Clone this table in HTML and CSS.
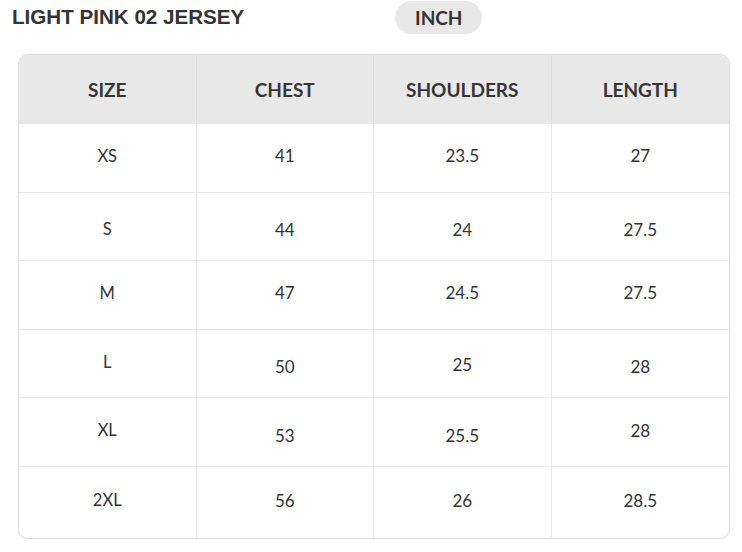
FILE: index.html
```html
<!DOCTYPE html>
<html lang="en">
<head>
<meta charset="utf-8">
<title>Light Pink 02 Jersey – Size Chart</title>
<link rel="stylesheet" href="styles.css">
</head>
<body>
<div class="top">
  <h1 class="title">LIGHT PINK 02 JERSEY</h1>
  <span class="unit">INCH</span>
</div>
<div class="chart">
  <div class="cell head">SIZE</div>
  <div class="cell head">CHEST</div>
  <div class="cell head">SHOULDERS</div>
  <div class="cell head last-col">LENGTH</div>

  <div class="cell up">XS</div>
  <div class="cell num up">41</div>
  <div class="cell num up">23.5</div>
  <div class="cell num up last-col">27</div>

  <div class="cell dn">S</div>
  <div class="cell num dn">44</div>
  <div class="cell num dn">24</div>
  <div class="cell num dn last-col">27.5</div>

  <div class="cell up">M</div>
  <div class="cell num up">47</div>
  <div class="cell num up">24.5</div>
  <div class="cell num up last-col">27.5</div>

  <div class="cell up">L</div>
  <div class="cell num dn">50</div>
  <div class="cell num dn2">25</div>
  <div class="cell num dn last-col">28</div>

  <div class="cell up">XL</div>
  <div class="cell num dn">53</div>
  <div class="cell num dn">25.5</div>
  <div class="cell num up last-col">28</div>

  <div class="cell up last-row">2XL</div>
  <div class="cell num up last-row">56</div>
  <div class="cell num up last-row">26</div>
  <div class="cell num up last-row last-col">28.5</div>
</div>
</body>
</html>
```
FILE: styles.css
```css
html, body {
  margin: 0;
  padding: 0;
  background: #ffffff;
}

body {
  color: #333333;
  font-family: Lato, "Liberation Sans", sans-serif;
}

.top {
  display: flex;
  align-items: center;
  padding: 1px 0 0 12px;
  height: 33px;
}

.title {
  width: 383px;
  margin: 0 0 2px 0;
  font-family: "Liberation Sans", Arial, sans-serif;
  font-weight: 700;
  font-size: 20.6px;
  line-height: normal;
  color: #333333;
}

.unit {
  height: 33px;
  line-height: 34px;
  padding: 0 20px;
  border-radius: 17px;
  background: #e8e8e8;
  font-family: Lato, sans-serif;
  font-weight: 700;
  font-size: 19px;
  color: #333333;
}

.chart {
  display: grid;
  grid-template-columns: repeat(4, 1fr);
  grid-template-rows: 69px repeat(5, 68.6px) 70.6px;
  box-sizing: border-box;
  width: 712px;
  margin: 20px 0 0 18px;
  border: 1px solid #dcdcdc;
  border-radius: 10px;
  overflow: hidden;
  box-shadow: 0 1px 2px rgba(0, 0, 0, 0.06);
}

.cell {
  display: flex;
  align-items: center;
  justify-content: center;
  box-sizing: border-box;
  border-right: 1px solid #e9e9e9;
  border-bottom: 1px solid #e9e9e9;
  font-family: Lato, sans-serif;
  font-size: 16.5px;
  color: #333333;
}

.head {
  background: #e8e8e8;
  border-right-color: #dedede;
  border-bottom: 1px solid #e8e8e8;
  font-weight: 700;
  font-size: 19px;
  color: #363636;
}

.num {
  font-family: "Liberation Sans Narrow", Lato, sans-serif;
  font-size: 17px;
}

.last-col {
  border-right: none;
}

.last-row {
  border-bottom: none;
}

.up {
  padding-bottom: 4px;
}

.dn {
  padding-top: 6px;
}

.dn2 {
  padding-top: 2px;
}
```
